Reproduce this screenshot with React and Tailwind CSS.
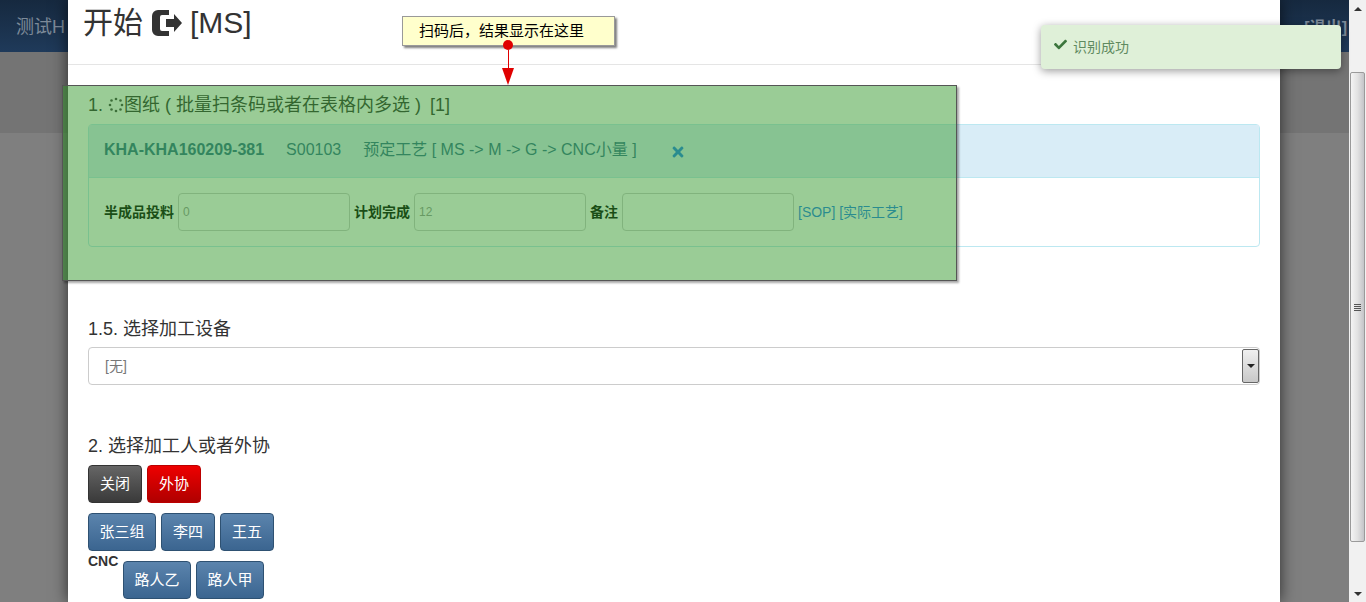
import React from "react";
import { FaCheck, FaTimes } from "react-icons/fa";

const font = "font-['Liberation_Sans','Noto_Sans_CJK_SC',sans-serif]";

const blueBtn =
  "h-[38px] rounded-[4px] border border-[#2e5172] bg-gradient-to-b from-[#5b84ad] to-[#3b6590] text-[15px] text-white flex items-center justify-center";

const Btn = ({ className, children }) => (
  <button className={`h-[38px] rounded-[4px] border text-[15px] text-white flex items-center justify-center ${className}`}>
    {children}
  </button>
);

const Field = ({ label, value }) => (
  <div className="flex items-center gap-1">
    <span className="text-[14px] font-bold text-black">{label}</span>
    <div className="w-[172px] h-[38px] border border-[#ccc] rounded-[4px] bg-white flex items-center px-[4px] text-[12px] text-[#999]">
      {value}
    </div>
  </div>
);

// drawn sign-in icon beside the modal title
const SignIcon = () => (
  <svg width="32" height="28" viewBox="0 0 32 28" fill="#333" className="ml-px">
    <path d="M18 1H7a6 6 0 0 0-6 6v14a6 6 0 0 0 6 6h11v-5H11a2 2 0 0 1-2-2V8a2 2 0 0 1 2-2h7z" />
    <path d="M15 10h8V5l8 9-8 9v-5h-8z" />
  </svg>
);

const Spinner = () => (
  <svg width="16" height="16" viewBox="0 0 16 16" fill="#444" className="inline-block align-[-2px]">
    <circle cx="8" cy="2" r="1.3" />
    <circle cx="12.5" cy="3.5" r="1.3" />
    <circle cx="14" cy="8" r="1.3" />
    <circle cx="12.5" cy="12.5" r="1.3" />
    <circle cx="8" cy="14" r="1.3" />
    <circle cx="3.5" cy="12.5" r="1.3" />
    <circle cx="2" cy="8" r="1.3" />
    <circle cx="3.5" cy="3.5" r="1.3" />
  </svg>
);

const Scrollbar = () => (
  <div className="w-[17px] h-full bg-[#f1f1f1] flex flex-col items-center shrink-0">
    <div className="h-[17px] flex items-center justify-center">
      <div className="w-0 h-0 border-x-[4px] border-x-transparent border-b-[4px] border-b-[#333]" />
    </div>
    <div className="mt-[55px] h-[470px] w-[15px] border border-[#9a9a9a] rounded-[2px] bg-gradient-to-r from-[#f4f4f4] via-[#e2e2e2] to-[#c4c4c8] flex flex-col items-center justify-center gap-[1px]">
      <div className="w-[7px] h-px bg-[#555]" />
      <div className="w-[7px] h-px bg-[#555]" />
      <div className="w-[7px] h-px bg-[#555]" />
      <div className="w-[7px] h-px bg-[#555]" />
    </div>
    <div className="mt-auto h-[17px] flex items-center justify-center">
      <div className="w-0 h-0 border-x-[4px] border-x-transparent border-t-[4px] border-t-[#333]" />
    </div>
  </div>
);

export default function App() {
  return (
    <div className={`relative h-[602px] w-[1366px] overflow-hidden flex ${font}`}>
      {/* page behind the backdrop */}
      <div className="flex-1 flex flex-col bg-[#7f7f7f]">
        <div className="h-[52px] pt-[3px] bg-gradient-to-b from-[#16293f] to-[#1f3a5a] flex items-center justify-between pl-[16px] pr-[2px] text-[18px] text-[#7d8a99] shrink-0">
          <span>测试H</span>
          <span className="text-[16px] font-bold">[退出]</span>
        </div>
        <div className="h-[81px] bg-[#747474] shrink-0" />
        <div className="flex-1 bg-[#7f7f7f]" />
      </div>
      <Scrollbar />

      {/* modal */}
      <div className="absolute left-[68px] top-0 w-[1212px] h-[602px] bg-white text-[#333] shadow-[0_0_15px_rgba(0,0,0,0.65)]">
        <div className="h-[65px] border-b border-[#e5e5e5] pl-[15px] flex items-start">
          <h3 className="text-[30px] leading-[46px] flex items-center gap-[7px] text-[#333]">
            开始 <SignIcon /> [MS]
          </h3>
        </div>
        <div className="px-[20px] pt-[29px]">
          <div className="text-[18px] leading-[22px]">
            1. <Spinner />图纸 ( 批量扫条码或者在表格内多选 )<span className="ml-[4px]"> [1]</span>
          </div>
          <div className="mt-[8px] h-[123px] border border-[#bce8f1] rounded-[4px]">
            <div className="h-[53px] pb-[2px] bg-[#d9edf7] border-b border-[#bce8f1] flex items-center pl-[15px] text-[16px] text-[#31708f]">
              <b>KHA-KHA160209-381</b>
              <span className="ml-[22px]">S00103</span>
              <span className="ml-[22px]">预定工艺 [ MS -&gt; M -&gt; G -&gt; CNC小量 ]</span>
              <FaTimes className="ml-[33px] mt-[4px] text-[#1f7ef0]" size={16} />
            </div>
            <div className="flex items-center pl-[15px] pt-[15px] gap-[4px]">
              <Field label="半成品投料" value="0" />
              <Field label="计划完成" value="12" />
              <Field label="备注" value="" />
              <span className="text-[14px] text-[#1f7ef0]">[SOP] [实际工艺]</span>
            </div>
          </div>

          <div className="mt-[71px] text-[18px] leading-[22px]">1.5. 选择加工设备</div>
          <div className="mt-[7px] h-[38px] border border-[#ccc] rounded-[4px] flex items-center justify-between pl-[16px] text-[14px] text-[#777]">
            <span>[无]</span>
            <div className="w-[17px] h-[34px] border border-[#666] rounded-[2px] bg-gradient-to-b from-[#f0f0f0] to-[#c8c8c8] flex items-center justify-center">
              <div className="w-0 h-0 border-x-[4px] border-x-transparent border-t-[4px] border-t-[#222]" />
            </div>
          </div>

          <div className="mt-[50px] text-[18px] leading-[22px]">2. 选择加工人或者外协</div>
          <div className="mt-[8px] flex gap-[5px]">
            <Btn className="w-[54px] border-[#333] bg-gradient-to-b from-[#666] to-[#3a3a3a]">关闭</Btn>
            <Btn className="w-[54px] border-[#b00] bg-gradient-to-b from-[#ee0000] to-[#b00000]">外协</Btn>
          </div>
          <div className="mt-[10px] flex gap-[5px]">
            <button className={`${blueBtn} w-[68px]`}>张三组</button>
            <button className={`${blueBtn} w-[54px]`}>李四</button>
            <button className={`${blueBtn} w-[54px]`}>王五</button>
          </div>
          <div className="flex items-start">
            <span className="text-[14px] font-bold leading-[20px] w-[35px]">CNC</span>
            <div className="flex gap-[5px] pt-[10px]">
              <button className={`${blueBtn} w-[68px]`}>路人乙</button>
              <button className={`${blueBtn} w-[68px]`}>路人甲</button>
            </div>
          </div>
        </div>
      </div>

      {/* tutorial highlight over the first step */}
      <div className="absolute left-[62px] top-[85px] w-[895px] h-[196px] bg-[#359a2e]/50 border border-[#555] shadow-[2px_2px_2px_rgba(0,0,0,0.35)]" />

      {/* tutorial note and arrow */}
      <div className="absolute left-[402px] top-[16px] w-[213px] h-[30px] bg-[#ffffcc] border border-[#999] shadow-[2px_2px_2px_rgba(0,0,0,0.5)] flex items-center pl-[16px] text-[15px] text-black">
        扫码后，结果显示在这里
      </div>
      <div className="absolute left-[503px] top-[40px] flex flex-col items-center w-[10px]">
        <div className="w-[10px] h-[10px] rounded-full bg-[#e00000]" />
        <div className="w-px h-[18px] bg-[#e00000]" />
        <div className="w-0 h-0 border-x-[6px] border-x-transparent border-t-[17px] border-t-[#e00000]" />
      </div>

      {/* toast */}
      <div className="absolute left-[1041px] top-[25px] w-[300px] h-[44px] bg-[#dff0d8] rounded-[4px] shadow-[0_2px_8px_rgba(0,0,0,0.4)] flex items-center pl-[13px] gap-[6px] text-[14px] text-[#5f8a5f]">
        <FaCheck className="text-[#3c763d] -mt-[5px]" size={13} />
        识别成功
      </div>
    </div>
  );
}
